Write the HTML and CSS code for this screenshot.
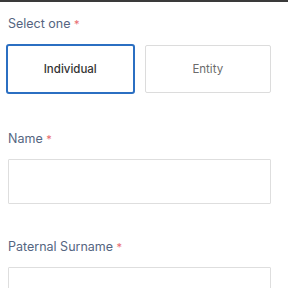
FILE: index.html
```html
<!DOCTYPE html>
<html lang="en">
<head>
  <meta charset="UTF-8" />
  <title>Applicant form</title>
  <link rel="stylesheet" href="styles.css">
</head>
<body>
  <div class="top-bar"></div>

  <form class="form">
    <!-- type selector -->
    <div class="field field-choice">
      <label class="field-label">Select one <span class="req">*</span></label>
      <div class="choice-row">
        <button type="button" class="choice selected">Individual</button>
        <button type="button" class="choice">Entity</button>
      </div>
    </div>

    <div class="field">
      <label class="field-label">Name <span class="req">*</span></label>
      <input type="text" class="text-input" />
    </div>

    <div class="field">
      <label class="field-label">Paternal Surname <span class="req">*</span></label>
      <input type="text" class="text-input" />
    </div>
  </form>
</body>
</html>
```

FILE: styles.css
```css
body {
  margin: 0;
  background: #fff;
  font-family: 'Inter', 'Noto Sans', sans-serif;
}

/* thin dark strip along the top edge */
.top-bar {
  height: 2px;
  background: #3a3a3a;
}

.form {
  padding: 14px 17px 0 8px;
}

.field {
  margin-bottom: 35px;
}

.field-choice {
  margin-bottom: 37px;
}

.field-label {
  display: block;
  height: 15px;
  font-size: 12.5px;
  line-height: 15px;
  color: #556581;
  margin-bottom: 13px;
}

.req {
  color: #e86a6f;
  font-size: 11px;
  line-height: 1;
}

/* Individual / Entity */
.choice-row {
  display: flex;
  align-items: center;
  gap: 10px;
  margin-left: -2px;
}

.choice {
  flex: 1;
  height: 48px;
  background: #fff;
  border: 1px solid #dcdcdc;
  border-radius: 2px;
  font-family: inherit;
  font-size: 11.5px;
  color: #6b6b6b;
}

.choice.selected {
  border: 2px solid #2b6fc2;
  border-radius: 3px;
  height: 50px;
  color: #333;
  font-weight: 500;
}

.text-input {
  display: block;
  box-sizing: border-box;
  width: 100%;
  height: 45px;
  border: 1px solid #dedede;
  border-radius: 1px;
  background: #fff;
}
```
